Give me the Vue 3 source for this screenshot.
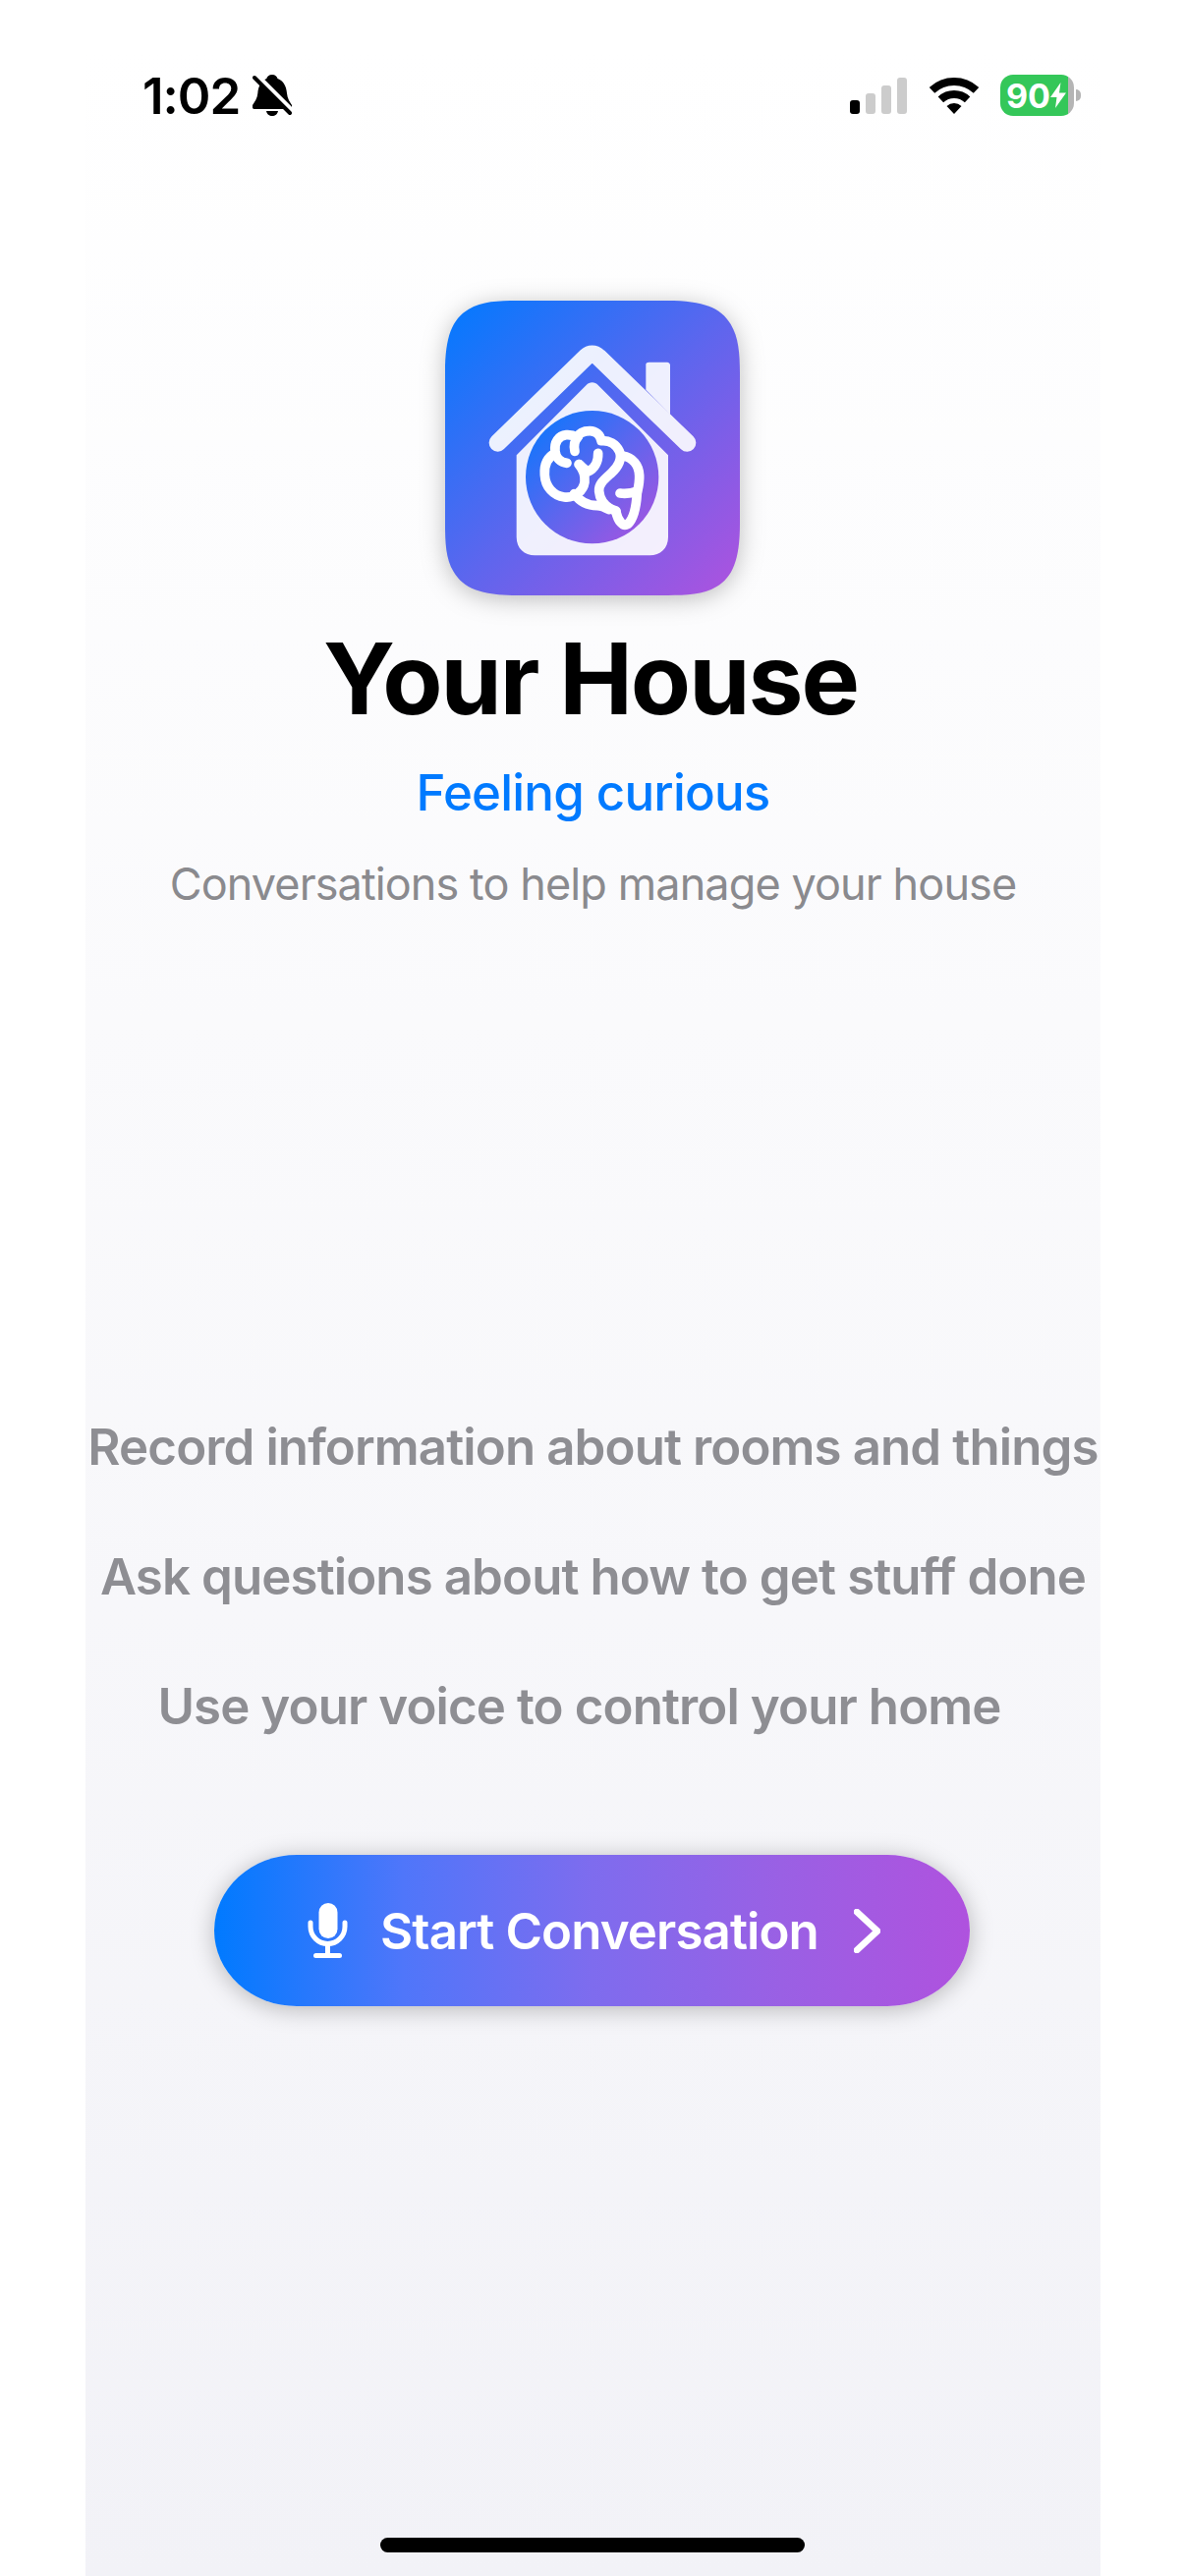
<script setup>
const features = [
  { text: "Record information about rooms and things", cls: "" },
  { text: "Ask questions about how to get stuff done", cls: "" },
  { text: "Use your voice to control your home", cls: "shifted" },
];
</script>

<template>
  <div class="screen">
    <header class="status">
      <span class="time">1:02</span>
      <svg class="bell" viewBox="0 0 40 42">
        <path d="M20 0c3 0 5 2 5.500 4c6 2 9 8 9.500 15c.3 5 3 9 5 12c.7 2 0 4-2 4H2c-2 0-3-2-2-4c2-3 5-7 5.300-12c.5-7 3.500-13 9-15c.5-2 2.500-4 5.700-4z" />
        <path d="M14 37h12c-.5 3-3 5-6 5s-5.500-2-6-5z" />
        <path d="M5 2L41 38" stroke="#fff" stroke-width="6" />
        <path d="M2 3L38 39" stroke="#000" stroke-width="4" stroke-linecap="round" />
      </svg>
      <div class="status-right">
        <div class="signal">
          <i class="on" style="height: 14px"></i>
          <i style="height: 21px"></i>
          <i style="height: 29px"></i>
          <i style="height: 37px"></i>
        </div>
        <svg class="wifi" viewBox="0 0 50 37">
          <path d="M2.500 12.900A33 33 0 0 1 47.500 12.900" fill="none" stroke="#000" stroke-width="8" />
          <path d="M11.400 22.400A20 20 0 0 1 38.600 22.400" fill="none" stroke="#000" stroke-width="8" />
          <path d="M25 37L17.500 29A11 11 0 0 1 32.500 29z" />
        </svg>
        <div class="battery">
          <div class="battery-body">
            <span>90</span>
            <svg class="bolt" viewBox="0 0 16 26">
              <path d="M10.500 0L0 15h6.500L5 26L16 10.500H9z" fill="#fff" />
            </svg>
          </div>
          <div class="battery-tip"></div>
        </div>
      </div>
    </header>

    <main class="content">
      <svg class="logo" viewBox="70 78 900 900">
        <defs>
          <linearGradient id="bg" x1="0" y1="0" x2="1" y2="1">
            <stop offset="0" stop-color="#007aff" />
            <stop offset=".5" stop-color="#5c66ee" />
            <stop offset="1" stop-color="#af52de" />
          </linearGradient>
        </defs>
        <path fill="url(#bg)" d="M290 78H748C860 78 912 100 942 150C966 190 970 240 970 298V758C970 870 948 922 898 952C858 976 808 978 750 978H290C178 978 126 956 96 906C72 866 70 816 70 758V298C70 186 92 134 142 104C182 80 232 78 290 78Z" />
        <g fill="#fff" fill-opacity=".9">
          <path fill-rule="evenodd" d="M519 328C526 328 532 331 537 336L751 550V800C751 834 727 856 695 856H344C312 856 288 834 288 800V550L501 336C506 331 512 328 519 328Z" />
          <path d="M683 272C683 268 688 266 692 266H748C753 266 757 270 757 275V415L757 425L683 350Z" />
        </g>
        <path d="M231 512L500 250C512 239 526 239 538 250L809 512" fill="none" stroke="#fff" stroke-opacity=".9" stroke-width="54" stroke-linecap="round" stroke-linejoin="round" />
        <circle cx="519" cy="617" r="203" fill="url(#bg)" />
        <g transform="translate(330 420)" fill="none" stroke="#fff" stroke-width="29" stroke-linecap="round" stroke-linejoin="round">
          <path d="M112 154C92 152 78 138 76 118C72 92 86 70 110 68C122 67 133 70 143 76C150 60 165 56 182 56C200 56 213 67 217 86C240 84 262 96 272 118C282 140 268 166 248 184C226 204 208 218 210 240C212 262 222 280 244 293C252 297 258 298 262 300" />
          <path d="M76 124C52 136 42 160 44 190C46 226 70 254 104 258C136 262 162 238 166 212C168 192 160 172 148 158" />
          <path d="M150 158C160 168 168 176 176 180C196 172 208 150 207 124" />
          <path d="M136 118C132 100 136 84 146 74" />
          <path d="M282 132C312 136 332 160 333 192C334 214 330 228 326 246C324 280 318 322 298 340C282 350 268 330 262 304" />
          <path d="M274 246C290 248 310 246 326 240" />
          <path d="M134 248C150 270 172 284 204 284C216 284 226 288 240 296" />
        </g>
      </svg>

      <h1 class="title">Your House</h1>
      <p class="mood">Feeling curious</p>
      <p class="subtitle">Conversations to help manage your house</p>

      <ul class="features">
        <li v-for="item in features" :key="item.text" :class="item.cls">{{ item.text }}</li>
      </ul>

      <button class="start">
        <svg class="mic" viewBox="0 0 41 56">
          <rect x="11.500" y="0" width="19" height="36" rx="9.500" fill="#fff" />
          <path d="M3 20v4a17.500 17.500 0 0 0 35 0v-4" fill="none" stroke="#fff" stroke-width="5" stroke-linecap="round" />
          <path d="M20.500 42v10" stroke="#fff" stroke-width="5" />
          <rect x="6" y="51" width="29" height="5" rx="2.500" fill="#fff" />
        </svg>
        <span class="start-label">Start Conversation</span>
        <svg class="chevron" viewBox="0 0 27 45">
          <path d="M3 3L24 22.500L3 42" fill="none" stroke="#fff" stroke-width="6.500" stroke-linecap="round" stroke-linejoin="round" />
        </svg>
      </button>
    </main>

    <div class="home-bar"></div>
  </div>
</template>

<style scoped>
.screen {
  width: 1033px;
  height: 2622px;
  margin-left: 87px;
  display: flex;
  flex-direction: column;
  background: linear-gradient(180deg, #fff 2%, #f2f2f7 100%);
  font-family: Inter, "Liberation Sans", sans-serif;
  overflow: hidden;
}

.status {
  display: flex;
  align-items: center;
  height: 60px;
  padding: 67px 20px 0 58px;
  flex-shrink: 0;
}

.time {
  width: 112px;
  margin-top: 2px;
  font-size: 51px;
  line-height: 60px;
  font-weight: 600;
  color: #000;
  letter-spacing: -1px;
}

.bell {
  width: 40px;
  height: 42px;
}

.status-right {
  margin-left: auto;
  display: flex;
  align-items: center;
}

.signal {
  display: flex;
  align-items: flex-end;
  gap: 6px;
  height: 37px;
  margin-right: 23px;
}

.signal i {
  width: 10px;
  border-radius: 3px;
  background: #ccc;
}

.signal i.on {
  background: #000;
}

.wifi {
  width: 50px;
  height: 37px;
  margin-right: 22px;
}

.battery {
  display: flex;
  align-items: center;
}

.battery-body {
  width: 75px;
  height: 42px;
  box-sizing: border-box;
  padding-left: 6px;
  display: flex;
  align-items: center;
  border-radius: 13px;
  background: linear-gradient(90deg, #34c759 92%, #b5b5b5 92%);
  color: #fff;
  font-size: 34px;
  font-weight: 700;
}

.bolt {
  width: 16px;
  height: 26px;
  flex-shrink: 0;
}

.battery-tip {
  width: 5px;
  height: 12px;
  margin-left: 2px;
  border-radius: 0 6px 6px 0;
  background: #b5b5b5;
}

.content {
  display: flex;
  flex-direction: column;
  align-items: center;
  padding-top: 179px;
}

.logo {
  width: 300px;
  height: 300px;
  margin-left: -1px;
  filter: drop-shadow(0 4px 12px rgba(0, 0, 0, 0.25));
  overflow: visible;
}

.title {
  margin: 25px 5px 0 0;
  font-size: 100px;
  line-height: 120px;
  font-weight: 700;
  color: #000;
  letter-spacing: -2px;
  white-space: nowrap;
}

.mood {
  margin: 25px 0 0;
  font-size: 51px;
  line-height: 62px;
  font-weight: 500;
  color: #007aff;
  letter-spacing: -0.8px;
  white-space: nowrap;
}

.subtitle {
  margin: 35px 0 0;
  font-size: 45px;
  line-height: 54px;
  color: #8a8a8e;
  letter-spacing: -0.9px;
  white-space: nowrap;
}

.features {
  list-style: none;
  margin: 515px 0 0;
  padding: 0;
  display: flex;
  flex-direction: column;
  align-items: center;
  gap: 70px;
  font-size: 51px;
  line-height: 62px;
  font-weight: 600;
  color: #8e8e93;
  letter-spacing: -0.9px;
  white-space: nowrap;
}

.features .shifted {
  margin-right: 28px;
}

.start {
  width: 769px;
  height: 154px;
  margin: 120px 0 0 131px;
  align-self: flex-start;
  padding: 0 0 0 4px;
  border: none;
  display: flex;
  align-items: center;
  justify-content: center;
  border-radius: 84px / 77px;
  background: linear-gradient(90deg, #007aff 0%, #4f76fa 25%, #7e6cee 50%, #9a60e4 75%, #af52de 100%);
  box-shadow: 0 3px 24px rgba(0, 0, 0, 0.26);
  color: #fff;
  font-family: inherit;
  font-size: 51px;
  font-weight: 600;
  letter-spacing: -0.9px;
}

.mic {
  width: 41px;
  height: 56px;
  margin-right: 33px;
}

.start-label {
  white-space: nowrap;
}

.chevron {
  width: 27px;
  height: 45px;
  margin-left: 36px;
}

.home-bar {
  width: 432px;
  height: 15px;
  margin: auto 0 24px 300px;
  border-radius: 8px;
  background: #000;
  flex-shrink: 0;
}
</style>

<style>
body {
  background: #fff;
}
</style>
